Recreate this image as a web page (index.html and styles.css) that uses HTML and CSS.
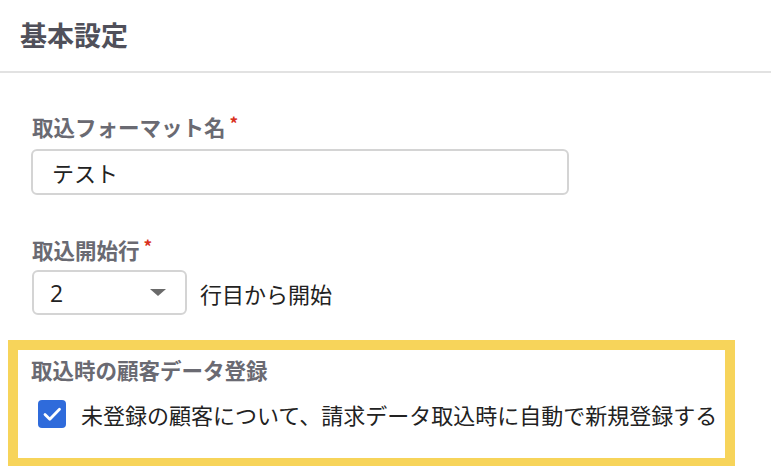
FILE: index.html
```html
<!DOCTYPE html>
<html lang="ja">
<head>
<meta charset="utf-8">
<title>基本設定</title>
<link rel="stylesheet" href="styles.css">
</head>
<body>
  <header class="header"><h1 class="title">基本設定</h1></header>
  <main class="content">
    <div class="field">
      <label class="label">取込フォーマット名<span class="req">*</span></label>
      <div class="input">テスト</div>
    </div>
    <div class="field field-second">
      <label class="label">取込開始行<span class="req">*</span></label>
      <div class="row">
        <div class="select"><span>2</span><span class="caret"></span></div>
        <span class="suffix">行目から開始</span>
      </div>
    </div>
  </main>
  <section class="highlight">
    <div class="label">取込時の顧客データ登録</div>
    <div class="check-row">
      <span class="checkbox">
        <svg viewBox="0 0 28 28" width="28" height="28"><path d="M7 14.5l4.8 4.8L21.5 9.2" fill="none" stroke="#fff" stroke-width="2.8" stroke-linecap="round" stroke-linejoin="round"/></svg>
      </span>
      <span class="check-text">未登録の顧客について、請求データ取込時に自動で新規登録する</span>
    </div>
  </section>
</body>
</html>
```

FILE: styles.css
```css
html, body {
  margin: 0;
  padding: 0;
  background: #ffffff;
  font-family: "Noto Sans CJK JP", "Noto Sans", sans-serif;
  overflow: hidden;
}
.header {
  height: 71px;
  border-bottom: 2px solid #e2e2e2;
  display: flex;
  align-items: center;
  padding-left: 20px;
}
.title {
  margin: 0;
  font-size: 27px;
  font-weight: 700;
  color: #50505a;
  line-height: 1;
  margin-top: -3px;
}
.content {
  padding: 40px 0 0 31px;
  display: flex;
  flex-direction: column;
}
.field {
  display: flex;
  flex-direction: column;
}
.field-second {
  margin-top: 41px;
}
.label {
  display: block;
  font-size: 21.5px;
  line-height: 28px;
  font-weight: 700;
  color: #6a6a72;
  padding-left: 1px;
  white-space: nowrap;
}
.req {
  color: #d9301e;
  font-size: 17px;
  vertical-align: top;
  line-height: 20px;
  margin-left: 4px;
}
.input {
  margin-top: 8px;
  box-sizing: border-box;
  width: 538px;
  height: 46px;
  border: 2px solid #d4d4d4;
  border-radius: 6px;
  display: flex;
  align-items: center;
  padding-left: 19px;
  font-size: 22px;
  color: #222222;
}
.row {
  margin-top: 6px;
  display: flex;
  align-items: center;
  gap: 13px;
}
.select {
  box-sizing: border-box;
  width: 155px;
  height: 45px;
  margin-left: 1px;
  border: 2px solid #d4d4d4;
  border-radius: 6px;
  display: flex;
  align-items: center;
  justify-content: space-between;
  padding: 0 19px 0 16px;
  font-family: "Open Sans", "Noto Sans", sans-serif;
  font-size: 23px;
  color: #222222;
}
.caret {
  width: 0;
  height: 0;
  border-left: 8px solid transparent;
  border-right: 8px solid transparent;
  border-top: 7px solid #6a6a6a;
}
.suffix {
  font-size: 22px;
  color: #222222;
}
.highlight {
  margin: 25px 0 0 8px;
  width: 727px;
  box-sizing: border-box;
  border: 10px solid #f7d45a;
  padding: 6px 0 29px 12px;
}
.check-row {
  margin-top: 15px;
  display: flex;
  align-items: center;
  gap: 15px;
  padding-left: 8px;
}
.checkbox {
  flex: none;
  width: 28px;
  height: 28px;
  border-radius: 4px;
  background: #2f6bdb;
  display: flex;
  align-items: center;
  justify-content: center;
}
.checkbox svg {
  display: block;
}
.check-text {
  font-size: 22px;
  color: #222222;
  line-height: 30px;
  white-space: nowrap;
}
```
